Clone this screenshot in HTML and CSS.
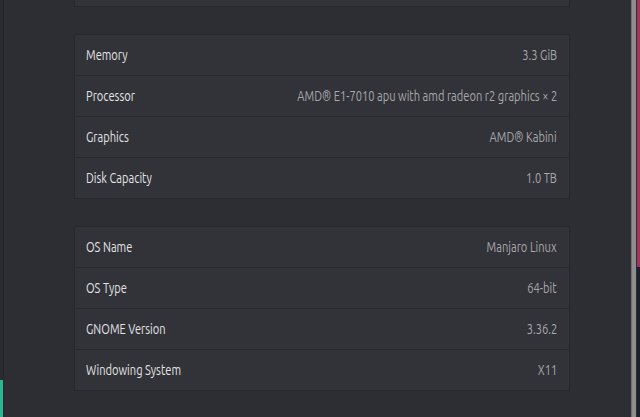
FILE: index.html
```html
<!DOCTYPE html>
<html>
<head>
    <title>About</title>
    <link rel="stylesheet" href="styles.css">
</head>
<body>
    <div class="sidebar-edge">
        <div class="sidebar-mark"></div>
    </div>

    <div class="content">
        <div class="panel">
            <div class="info-list">
                <div class="info-row">
                    <span class="label"></span>
                    <span class="value"></span>
                </div>
            </div>

            <div class="info-list">
                <div class="info-row">
                    <span class="label">Memory</span>
                    <span class="value">3.3 GiB</span>
                </div>
                <div class="info-row">
                    <span class="label">Processor</span>
                    <span class="value">AMD® E1-7010 apu with amd radeon r2 graphics × 2</span>
                </div>
                <div class="info-row">
                    <span class="label">Graphics</span>
                    <span class="value">AMD® Kabini</span>
                </div>
                <div class="info-row">
                    <span class="label">Disk Capacity</span>
                    <span class="value">1.0 TB</span>
                </div>
            </div>

            <div class="info-list">
                <div class="info-row">
                    <span class="label">OS Name</span>
                    <span class="value">Manjaro Linux</span>
                </div>
                <div class="info-row">
                    <span class="label">OS Type</span>
                    <span class="value">64-bit</span>
                </div>
                <div class="info-row">
                    <span class="label">GNOME Version</span>
                    <span class="value">3.36.2</span>
                </div>
                <div class="info-row">
                    <span class="label">Windowing System</span>
                    <span class="value">X11</span>
                </div>
            </div>
        </div>
    </div>

    <div class="scroll-edge"></div>
    <div class="desktop-edge"></div>
</body>
</html>
```

FILE: styles.css
```css
html, body {
    height: 100%;
}

body {
    margin: 0;
    display: flex;
    overflow: hidden;
    background-color: #2d2e33;
    font-family: "Ubuntu", "Open Sans", "DejaVu Sans", sans-serif;
    font-size: 15px;
}

/* left edge of the window: end of the sidebar */
.sidebar-edge {
    width: 3px;
    flex: none;
    display: flex;
    flex-direction: column;
    justify-content: flex-end;
    background-color: #2a2b30;
    border-right: 1px solid #25262a;
}

.sidebar-mark {
    height: 37px;
    background-color: #2bb591;
}

.content {
    flex: 1;
    padding-left: 70px;
}

.panel {
    width: 496px;
    margin-top: -35px;
}

.info-list {
    background-color: #323338;
    border: 1px solid #27282c;
    margin-bottom: 27px;
}

.info-row {
    height: 38px;
    display: flex;
    align-items: center;
    justify-content: space-between;
    padding: 0 12px 2px 11px;
    border-top: 1px solid #28292d;
}

.info-row:first-child {
    border-top: none;
}

/* the font of the screenshot is a narrow one, so squeeze the text */
.label, .value {
    display: inline-block;
    white-space: nowrap;
    transform: scaleX(0.74);
}

.label {
    color: #e4e4e6;
    transform-origin: left center;
}

.value {
    color: #a8a8ac;
    transform-origin: right center;
}

/* window border / scroll trough on the right */
.scroll-edge {
    width: 4px;
    flex: none;
    margin-left: 1px;
    background-color: #8e8e90;
    border-left: 1px solid #6f7072;
}

.desktop-edge {
    width: 3px;
    flex: none;
    margin-left: 1px;
    background: linear-gradient(#a8325e 0, #a8325e 267px, #1d202c 267px);
}
```
